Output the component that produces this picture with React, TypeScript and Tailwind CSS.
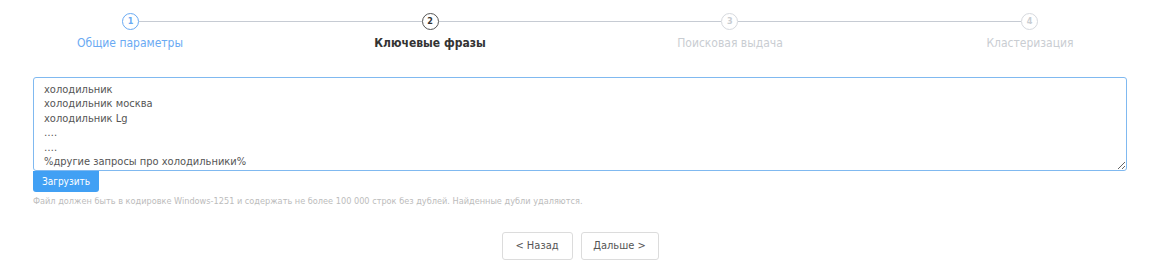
// KeywordsStep — second step of a clustering wizard: stepper, phrase input, upload and nav buttons.

const STEPS = [
  { n: 1, label: "Общие параметры", state: "done" },
  { n: 2, label: "Ключевые фразы", state: "active" },
  { n: 3, label: "Поисковая выдача", state: "todo" },
  { n: 4, label: "Кластеризация", state: "todo" },
] as const

const PHRASES = [
  "холодильник",
  "холодильник москва",
  "холодильник Lg",
  "….",
  "….",
  "%другие запросы про холодильники%",
].join("\n")

function StepCircle({ n, state }: { n: number; state: string }) {
  const cls =
    state === "done"
      ? "border-[#6aaaf3] text-[#6aaaf3]"
      : state === "active"
      ? "border-[#555] text-[#333]"
      : "border-[#d6d9de] text-[#c9cdd2]"
  return (
    <div
      className={`w-[17px] h-[17px] shrink-0 rounded-full border-[1.5px] flex items-center justify-center text-[9px] font-bold leading-none ${cls}`}
    >
      {n}
    </div>
  )
}

export default function App() {
  return (
    <div className="w-[1160px] h-[273px] bg-white font-['DejaVu_Sans_Condensed','DejaVu_Sans',sans-serif] overflow-hidden">
      {/* ── STEPPER ── circles joined by lines */}
      <div className="flex items-center px-[122px] pt-[13px]">
        {STEPS.map((s, i) => (
          <div key={s.n} className={`flex items-center ${i < STEPS.length - 1 ? "flex-1" : ""}`}>
            <StepCircle n={s.n} state={s.state} />
            {i < STEPS.length - 1 && <div className="flex-1 h-px bg-[#c6cbd3]" />}
          </div>
        ))}
      </div>
      <div className="flex justify-between px-[70px] mt-[6px]">
        {STEPS.map((s) => (
          <div
            key={s.n}
            className={`w-[120px] text-center whitespace-nowrap text-[12px] leading-[15px] flex justify-center
              ${s.state === "done" ? "text-[#6aaaf3]" : s.state === "active" ? "text-[#333] font-bold" : "text-[#c9cdd2]"}`}
          >
            {s.label}
          </div>
        ))}
      </div>

      {/* ── PHRASES INPUT ── */}
      <div className="px-[33px] mt-[26px]">
        <textarea
          defaultValue={PHRASES}
          spellCheck={false}
          className="block w-full h-[94px] border border-[#80b9f0] rounded-[3px] px-[10px] pt-[5px] text-[11px] leading-[14.4px] text-[#555] outline-none"
        />
        <button className="block w-[66px] h-[21px] bg-[#41a0f4] text-white text-[10px] rounded-b-[3px]">
          Загрузить
        </button>
        <p className="mt-[3px] text-[9.1px] leading-[12px] text-[#bcbcbc]">
          Файл должен быть в кодировке Windows-1251 и содержать не более 100 000 строк без дублей. Найденные дубли удаляются.
        </p>
      </div>

      {/* ── NAVIGATION ── */}
      <div className="flex justify-center gap-[8px] mt-[25px]">
        <button className="w-[71px] h-[28px] border border-[#dcdcdc] rounded-[3px] text-[11px] text-[#555] bg-white">
          &lt; Назад
        </button>
        <button className="w-[78px] h-[28px] border border-[#dcdcdc] rounded-[3px] text-[11px] text-[#555] bg-white">
          Дальше &gt;
        </button>
      </div>
    </div>
  )
}
